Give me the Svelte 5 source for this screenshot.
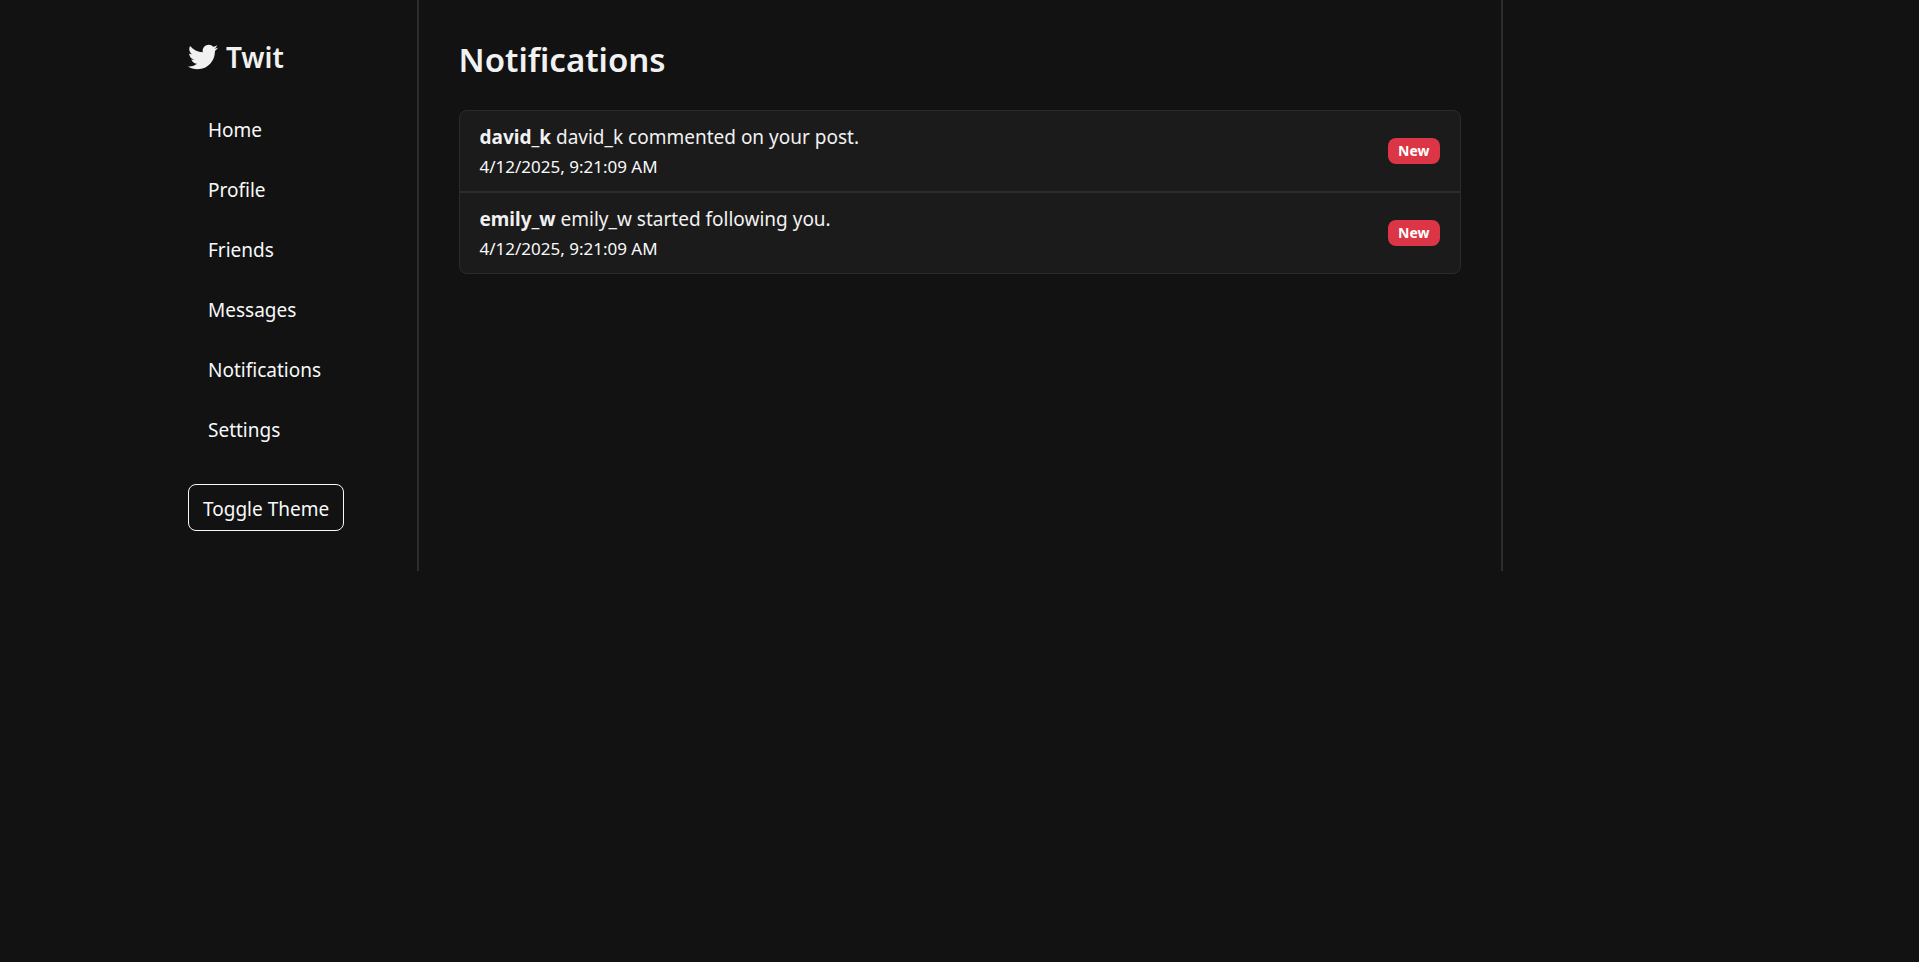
<script>
  const links = ['Home', 'Profile', 'Friends', 'Messages', 'Notifications', 'Settings'];
  const notifications = [
    { user: 'david_k', text: 'david_k commented on your post.', time: '4/12/2025, 9:21:09 AM' },
    { user: 'emily_w', text: 'emily_w started following you.', time: '4/12/2025, 9:21:09 AM' }
  ];
  let light = $state(false);
</script>

<div class="layout" class:light>
  <aside class="sidebar">
    <h2 class="brand">
      <svg viewBox="0 0 512 512" aria-hidden="true">
        <path d="M459.37 151.716c.325 4.548.325 9.097.325 13.645 0 138.72-105.583 298.558-298.558 298.558-59.452 0-114.68-17.219-161.137-47.106 8.447.974 16.568 1.299 25.34 1.299 49.055 0 94.213-16.568 130.274-44.832-46.132-.975-84.792-31.188-98.112-72.772 6.498.974 12.995 1.624 19.818 1.624 9.421 0 18.843-1.3 27.614-3.573-48.081-9.747-84.143-51.98-84.143-102.985v-1.299c13.969 7.797 30.214 12.67 47.431 13.319-28.264-18.843-46.781-51.005-46.781-87.391 0-19.492 5.197-37.36 14.294-52.954 51.655 63.675 129.3 105.258 216.365 109.807-1.624-7.797-2.599-15.918-2.599-24.04 0-57.828 46.782-104.934 104.934-104.934 30.213 0 57.502 12.67 76.67 33.137 23.715-4.548 46.456-13.32 66.599-25.34-7.798 24.366-24.366 44.833-46.132 57.827 21.117-2.273 41.584-8.122 60.426-16.243-14.292 20.791-32.161 39.308-52.628 54.253z" />
      </svg>
      <span>Twit</span>
    </h2>
    <nav>
      {#each links as link}
        <a href="#{link.toLowerCase()}">{link}</a>
      {/each}
    </nav>
    <button type="button" onclick={() => (light = !light)}>Toggle Theme</button>
  </aside>

  <main>
    <h1>Notifications</h1>
    <ul>
      {#each notifications as item}
        <li>
          <div class="body">
            <p><strong>{item.user}</strong> {item.text}</p>
            <time>{item.time}</time>
          </div>
          <span class="badge">New</span>
        </li>
      {/each}
    </ul>
  </main>

  <div class="rail"></div>
</div>

<style>
  :global(body) {
    background: #121212;
  }

  .layout {
    display: grid;
    grid-template-columns: 2fr 8fr 2fr;
    max-width: 1623px;
    margin: 0 auto;
    color: #f1f1f1;
    font-family: 'Segoe UI', 'Noto Sans', sans-serif;
    font-size: 19px;
    line-height: 30px;
  }

  .layout * {
    box-sizing: border-box;
  }

  .light {
    color: #121212;
    background: #fff;
  }

  .sidebar {
    padding: 40px;
    border-right: 2px solid #2c2c2c;
  }

  .brand {
    display: flex;
    align-items: center;
    gap: 8px;
    margin: 0 0 30px;
    font-size: 28px;
    font-weight: 600;
    line-height: 34px;
  }

  .brand svg {
    width: 30px;
    height: 30px;
    fill: currentColor;
  }

  nav {
    display: flex;
    flex-direction: column;
    gap: 10px;
    margin-bottom: 30px;
  }

  nav a {
    padding: 11px 20px 9px;
    color: #f8f9fa;
    text-decoration: none;
  }

  button {
    padding: 9px 14px 6px;
    border: 1px solid #f8f9fa;
    border-radius: 8px;
    background: transparent;
    color: #f8f9fa;
    font: inherit;
    white-space: nowrap;
    cursor: pointer;
  }

  .light a,
  .light button {
    color: #121212;
    border-color: #121212;
  }

  main {
    padding: 40px;
  }

  h1 {
    margin: 0 0 30px;
    font-size: 33px;
    font-weight: 600;
    line-height: 40px;
  }

  ul {
    margin: 0;
    padding: 0;
    list-style: none;
  }

  li {
    display: flex;
    align-items: center;
    justify-content: space-between;
    padding: 10px 20px;
    border: 1px solid #2c2c2c;
    background: #1b1b1b;
  }

  li:first-child {
    border-radius: 8px 8px 0 0;
  }

  li:last-child {
    border-radius: 0 0 8px 8px;
  }

  p {
    margin: 0;
    line-height: 32px;
  }

  time {
    display: block;
    color: #f8f9fa;
    font-size: 17px;
    line-height: 28px;
  }

  .badge {
    padding: 3px 10px;
    border-radius: 8px;
    background: #dc3545;
    color: #fff;
    font-size: 14px;
    font-weight: 700;
    line-height: 20px;
  }

  .rail {
    border-left: 2px solid #2c2c2c;
  }
</style>
